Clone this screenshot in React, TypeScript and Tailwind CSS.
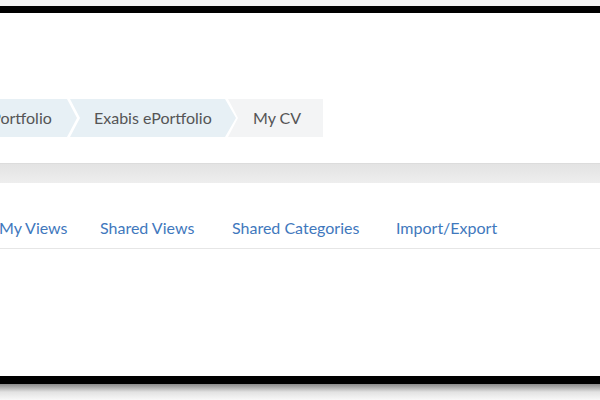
import React from "react";

const font = { fontFamily: "Lato, 'Open Sans', sans-serif" };

export default function App() {
  return (
    <div className="w-[600px] h-[400px] overflow-hidden bg-white" style={font}>
      <div className="h-[6px] bg-[#f3f3f3]" />
      <div className="h-[7px] bg-black" />
      <div className="h-[363px] bg-white flex flex-col">
        <div className="h-[86px]" />
        <div className="flex h-[38px] text-[16px] text-[#555]">
          <div
            className="ml-[-20px] w-[97px] h-full bg-[#e7f0f5] flex items-center pl-[3px] whitespace-nowrap"
            style={{ clipPath: "polygon(0 0, calc(100% - 10px) 0, 100% 50%, calc(100% - 10px) 100%, 0 100%)" }}
          >
            ePortfolio
          </div>
          <div
            className="ml-[-7px] w-[166px] h-full bg-[#e7f0f5] flex items-center pl-[24px] whitespace-nowrap"
            style={{ clipPath: "polygon(0 0, calc(100% - 11px) 0, 100% 50%, calc(100% - 11px) 100%, 0 100%, 10px 50%)" }}
          >
            Exabis ePortfolio
          </div>
          <div
            className="ml-[-8px] w-[95px] h-full bg-[#f3f4f5] flex items-center pl-[25px] whitespace-nowrap"
            style={{ clipPath: "polygon(0 0, 100% 0, 100% 100%, 0 100%, 10px 50%)" }}
          >
            My CV
          </div>
        </div>
        <div className="h-[26px]" />
        <div className="h-[20px] bg-gradient-to-b from-[#e3e3e3] to-[#eeeeee] border-t border-[#dcdcdc]" />
        <div className="h-[66px] border-b border-[#e6e6e6] flex items-end pb-[5px] text-[16px] text-[#3f78bd]">
          <div className="flex items-center h-[30px] ml-[-1px] whitespace-nowrap">
            <span className="w-[101px]">My Views</span>
            <span className="w-[132px]">Shared Views</span>
            <span className="w-[164px]">Shared Categories</span>
            <span>Import/Export</span>
          </div>
        </div>
        <div className="flex-1" />
      </div>
      <div className="h-[8px] bg-black" />
      <div className="h-[16px] bg-gradient-to-b from-[#8a8a8a] via-[#e2e2e2] to-[#f8f8f8]" />
    </div>
  );
}
